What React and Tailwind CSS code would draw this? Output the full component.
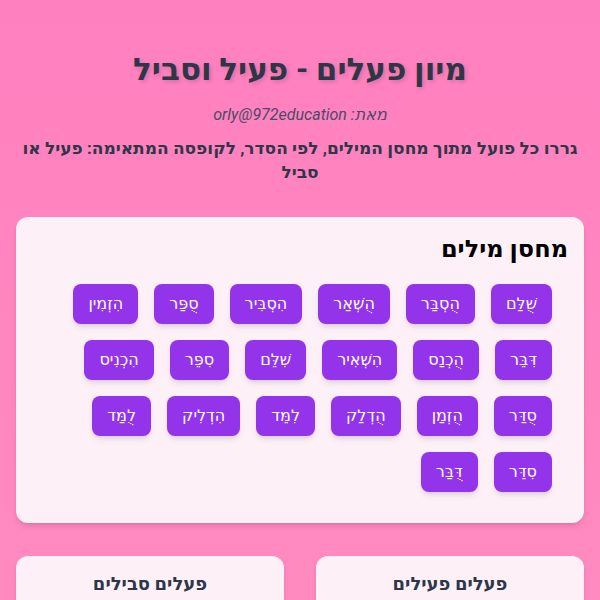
const words = [
  "שֻׁלַּם", "הֻסְבַּר", "הֻשְׁאַר", "הִסְבִּיר", "סֻפַּר", "הִזְמִין",
  "דִּבֵּר", "הֻכְנַס", "הִשְׁאִיר", "שִׁלֵּם", "סִפֵּר", "הִכְנִיס",
  "סֻדַּר", "הֻזְמַן", "הֻדְלַק", "לִמֵּד", "הִדְלִיק", "לֻמַּד",
  "סִדֵּר", "דֻּבַּר",
];

function WordChip({ word }) {
  return (
    <div className="h-10 px-[15px] flex items-center justify-center rounded-lg bg-[#9333ea] text-white text-base shadow-md cursor-grab">
      {word}
    </div>
  );
}

function DropBox({ title }) {
  return (
    <div className="bg-[#fdf0f7] rounded-xl shadow-md pt-4 px-4 min-h-[120px]">
      <h3 className="text-lg leading-6 font-bold text-center text-[#2d3748]">{title}</h3>
    </div>
  );
}

export default function App() {
  return (
    <div
      dir="rtl"
      className="min-h-screen bg-gradient-to-b from-[#ff80bf] to-[#ff8cc0] px-4 pt-[52px] pb-8 font-['Roboto','Noto_Sans','DejaVu_Sans',sans-serif]"
    >
      <h1 className="text-[31px] leading-9 font-bold text-center text-[#2d3748] [text-shadow:2px_2px_4px_rgba(0,0,0,0.15)]">
        מיון פעלים - פעיל וסביל
      </h1>
      <p className="mt-[15px] text-base leading-6 italic text-center text-[#4a4a68]">מאת: orly@972education</p>
      <p className="mt-[9px] text-[17px] font-bold text-center text-[#2d3748] leading-6">
        גררו כל פועל מתוך מחסן המילים, לפי הסדר, לקופסה המתאימה: פעיל או סביל
      </p>

      {/* Word bank */}
      <div className="mt-[33px] bg-[#fdf0f7] rounded-xl shadow-md pt-4 px-4 pb-[31px]">
        <h2 className="text-2xl leading-8 font-bold text-black">מחסן מילים</h2>
        <div className="mt-[19px] px-4 flex flex-wrap gap-4">
          {words.map((w, i) => (
            <WordChip key={i} word={w} />
          ))}
        </div>
      </div>

      {/* Target boxes */}
      <div className="mt-[33px] grid grid-cols-2 gap-8">
        <DropBox title="פעלים פעילים" />
        <DropBox title="פעלים סבילים" />
      </div>
    </div>
  );
}
